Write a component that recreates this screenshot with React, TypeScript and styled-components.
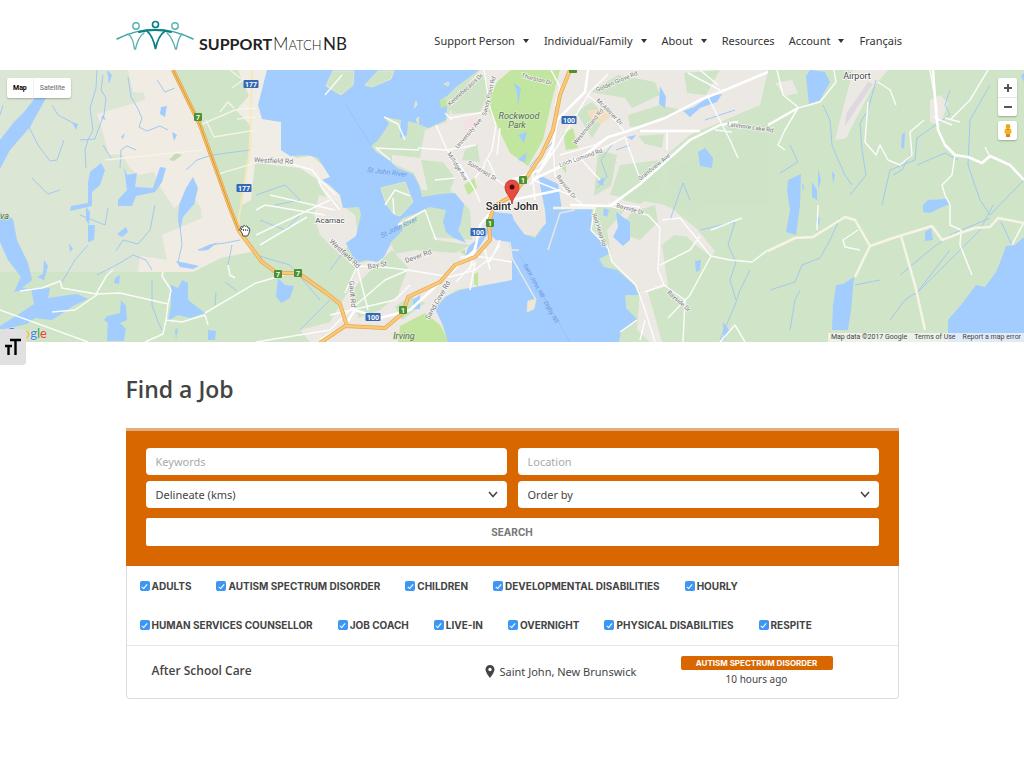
import React from "react";
import styled, { createGlobalStyle } from "styled-components";

const GlobalStyle = createGlobalStyle`
  *, *::before, *::after { box-sizing: border-box; }
  body { margin: 0; background: #fff; color: #444; font-family: "Noto Sans", "Open Sans", sans-serif; font-size: 11px; }
  a { color: inherit; text-decoration: none; }
  h1, ul { margin: 0; padding: 0; }
`;

const Header = styled.header`
  display: flex;
  justify-content: center;
  height: 70px;
  padding: 0 22px 0 16px;
`;
const HeaderInner = styled.div`
  display: flex;
  justify-content: space-between;
  width: 100%;
  max-width: 786px;
`;
const LogoLink = styled.a`
  display: flex;
  align-items: flex-start;
  padding-top: 18px;
  margin-left: -3px;
`;
const Nav = styled.nav`
  display: flex;
  align-items: center;
  padding-top: 12px;
`;
const NavList = styled.ul`
  display: flex;
  gap: 14px;
  list-style: none;
`;
const NavLink = styled.a<{ $menu?: boolean }>`
  display: flex;
  align-items: center;
  gap: 8px;
  line-height: 16px;
  color: #333;
  white-space: nowrap;
  &::after {
    content: "";
    display: ${(p) => (p.$menu ? "block" : "none")};
    border: 3px solid transparent;
    border-top: 4px solid #333;
    border-bottom: 0;
    margin-right: 1px;
  }
`;

const MapArea = styled.section`
  position: relative;
  height: 272px;
  background: #d0e4c8;
`;
const MapSvg = styled.svg`
  display: block;
  width: 100%;
  height: 100%;
  font-family: Roboto, sans-serif;
`;
const MapCard = styled.div`
  position: absolute;
  display: flex;
  background: #fff;
  border-radius: 2px;
  box-shadow: 0 1px 2px rgba(0, 0, 0, 0.25);
`;
const TypeSwitch = styled(MapCard)`
  top: 8px;
  left: 7px;
`;
const TypeButton = styled.button<{ $active?: boolean }>`
  height: 20px;
  padding: 0 6px;
  border: 0;
  background: none;
  font: ${(p) => (p.$active ? 700 : 400)} 7px Roboto, sans-serif;
  color: ${(p) => (p.$active ? "#000" : "#666")};
  & + & { border-left: 1px solid #eee; }
`;
const ZoomBox = styled(MapCard)`
  flex-direction: column;
  top: 8px;
  right: 7px;
`;
const PegmanBox = styled(MapCard)`
  top: 51px;
  right: 7px;
`;
const IconButton = styled.button`
  display: grid;
  place-items: center;
  width: 19px;
  height: 19px;
  padding: 0;
  border: 0;
  background: none;
  & + & { border-top: 1px solid #e6e6e6; }
`;
const Attribution = styled.div`
  position: absolute;
  right: 0;
  bottom: 0;
  display: flex;
  gap: 7px;
  padding: 0 3px;
  background: rgba(245, 245, 245, 0.75);
  font: 7px/9px Roboto, sans-serif;
  color: #444;
`;
const GoogleMark = styled.a`
  position: absolute;
  left: 6px;
  bottom: 1px;
  font: 500 13px/15px Lato, sans-serif;
  text-shadow: 0 0 1px #fff;
`;
const Tint = styled.span<{ $color: string }>`
  color: ${(p) => p.$color};
`;
const FontSizeButton = styled.button`
  position: absolute;
  left: 0;
  bottom: -23px;
  display: grid;
  place-items: center;
  width: 26px;
  height: 36px;
  padding: 0;
  border: 0;
  border-radius: 0 3px 3px 0;
  background: #e0e0e0;
`;

const Main = styled.main`
  width: 100%;
  max-width: 773px;
  margin: 0 auto;
  padding-bottom: 70px;
`;
const Title = styled.h1`
  padding: 31px 0 23px;
  font: 600 23px/32px "Open Sans", sans-serif;
  color: #444;
`;
const Panel = styled.div`
  border: 1px solid #ddd;
  border-top: 0;
  border-radius: 0 0 4px 4px;
`;
const SearchForm = styled.form`
  display: grid;
  grid-template-columns: 1fr 1fr;
  gap: 6px 11px;
  margin: 0 -1px;
  padding: 17px 20px 20px;
  border-top: 3px solid #e3ac7c;
  background: #d96700;
`;
const field = `
  width: 100%;
  height: 27px;
  padding: 0 10px;
  border: 0;
  border-radius: 4px;
  background: #fff;
  color: #444;
  font: 11px/16px "Noto Sans", sans-serif;
`;
const TextField = styled.input`
  ${field}
  &::placeholder { color: #aaa; opacity: 1; }
`;
const SelectWrap = styled.div`
  display: grid;
  align-items: center;
  & > * { grid-area: 1 / 1; }
  & > svg { justify-self: end; margin-right: 9px; pointer-events: none; }
`;
const SelectField = styled.select`
  ${field}
  appearance: none;
`;
const SearchButton = styled.button`
  grid-column: 1 / -1;
  height: 28px;
  margin-top: 4px;
  border: 0;
  border-radius: 2px;
  background: #fff;
  color: #777;
  font: 700 10px/12px Inter, sans-serif;
`;
const Types = styled.ul`
  display: flex;
  flex-wrap: wrap;
  gap: 23px 25px;
  padding: 12px 40px 12px 13px;
  list-style: none;
`;
const TypeLabel = styled.label`
  display: flex;
  align-items: center;
  gap: 2px;
  font: 700 10px/16px Inter, sans-serif;
  color: #444;
  white-space: nowrap;
`;
const Tick = styled.input`
  appearance: none;
  display: grid;
  place-items: center;
  width: 10px;
  height: 10px;
  margin: 0;
  border-radius: 2px;
  background: #3d97f2;
  &:checked::after {
    content: "";
    width: 3px;
    height: 6px;
    border: solid #fff;
    border-width: 0 1px 1px 0;
    transform: rotate(40deg);
  }
`;
const Job = styled.a`
  display: grid;
  grid-template-columns: 333px 1fr 152px;
  align-items: center;
  height: 53px;
  padding: 0 65px 2px 25px;
  border-top: 1px solid #e5e5e5;
`;
const JobTitle = styled.strong`
  font: 600 12px/16px "Open Sans", sans-serif;
`;
const Place = styled.span`
  display: flex;
  align-items: center;
  gap: 5px;
`;
const JobMeta = styled.span`
  display: flex;
  flex-direction: column;
  align-items: center;
  gap: 2px;
  font-size: 10px;
  line-height: 15px;
`;
const Badge = styled.span`
  width: 100%;
  border-radius: 2px;
  background: #d96700;
  color: #fff;
  text-align: center;
  font: 700 8px/14px Inter, sans-serif;
`;

const Logo = () => (
  <svg width="240" height="40" viewBox="113 18 240 40" role="img" aria-label="Support Match NB">
    <g fill="none" strokeLinecap="round">
      <path d="M117 39 Q155 20 193 39" stroke="#3fa3a8" strokeWidth="1.6" />
      <path d="M139 32 Q155 28 171 32" stroke="#0d8086" strokeWidth="2" />
      <g stroke="#5ab1b4" strokeWidth="1.4">
        <circle cx="136" cy="26" r="3.2" />
        <circle cx="175" cy="26" r="3.2" />
        <path d="M128 34 Q133 37 134.500 49 M144 33 Q138 37 135.500 49" />
        <path d="M167 33 Q172 37 175.500 49 M182 34 Q178 38 176.500 49" />
      </g>
      <g stroke="#0d8086" strokeWidth="1.7">
        <circle cx="155.500" cy="24.500" r="3" />
        <path d="M147 31 Q153 36 155.500 49 Q158 36 165 31" />
      </g>
    </g>
    <g fill="#222" fontFamily="Lato, sans-serif">
      <text x="199" y="50" fontSize="16" fontWeight="700">SUPPORT</text>
      <text x="273" y="50" fontSize="17" fontWeight="300">M<tspan fontSize="13">ATCH</tspan></text>
      <text x="323" y="50" fontSize="17" fontWeight="400">NB</text>
    </g>
  </svg>
);

const Shield = ({ x, y, n, green }: { x: number; y: number; n?: string; green?: boolean }) => {
  const w = green ? 8 : 15;
  return (
    <g>
      <rect x={x - w / 2} y={y - 4} width={w} height="8" rx="1" fill={green ? "#4d9135" : "#3468b5"} />
      {n && <text x={x} y={y + 3} fontSize="7" fontWeight="700" fill="#fff" textAnchor="middle">{n}</text>}
    </g>
  );
};

const RoadLabel = ({ x, y, r = 0, size = 7, children }: { x: number; y: number; r?: number; size?: number; children: string }) => (
  <text transform={`translate(${x} ${y}) rotate(${r})`} fontSize={size} fill="#777" stroke="#fff" strokeWidth="1.5" paintOrder="stroke" strokeOpacity=".7">
    {children}
  </text>
);

const CityMap = () => (
  <MapSvg viewBox="0 70 1024 272" preserveAspectRatio="xMidYMid slice" role="img" aria-label="Map of Saint John">
    <rect x="0" y="70" width="1024" height="272" fill="#d0e4c8" />
    <path fill="#dce6d5" d="M0 70H174L200 128 229 210 250 245 193 272H0Z" />
    <path fill="#f0ece3" d="M128 70 133 92 144 93 145 100 97 114 101 126 109 155 122 154 130 168 138 175 154 172 161 188 174 208 193 196 201 208 202 218 162 235 167 260 140 256 138 272H193L220 258 256 251 245 236 229 210 215 165 200 128 174 70Z" />
    <path fill="#c5dbb8" d="M169 160 176 153 182 155 174 161Z" />
    <path fill="#efede5" d="M238 70H268L260 105 263 118 281 122 284 150 296 158 312 156 330 172 340 195 344 214 334 212 318 180 300 168 255 163 251 200 242 205 248 160 250 125 236 110 249 96Z" />

    {/* built-up areas */}
    <g fill="#ece9e4">
      <path d="M480 70 455 98 446 122 425 130 420 158 392 155 392 163 414 173 422 190 450 190 470 210 472 240 400 235 380 258 357 264 350 288 330 322 300 330 310 342H448L435 305 456 290 512 281 520 240 545 225 560 208 620 206 670 215 690 240 710 256 700 235 665 205 610 195 620 165 660 160 690 135 760 105 768 70Z" />
      <path d="M607 230 612 262 640 290 637 330 650 342H662L648 292 668 286 662 245 674 235 700 238 712 256 715 251 698 230 670 207 628 207Z" />
      <path d="M853 70 835 140 846 138 871 90 888 70Z" />
      <path d="M319 195 335 200 355 215 358 235 340 255 320 235 314 215Z" />
      <path d="M775 83 792 80 798 93 785 96Z M930 100 940 95 948 103 940 125 930 122Z" />
    </g>
    <path fill="#ddd9df" d="M846 114 868 82 873 84 845 126Z" />
    <g fill="#cfe3c6">
      <path d="M449 99 476 78 484 74 490 92 480 112 452 114Z M379 139 400 122 424 136 411 155 374 146Z" />
      <path d="M421 160 443 162 455 178 450 191 428 191Z M465 150 477 144 480 162 462 160Z M590 92 618 75 655 82 660 95 632 108 625 98Z M628 115 660 105 680 110 650 125 630 127Z M576 112 592 102 606 116 592 138Z M638 136 664 134 662 148 645 144Z M598 150 617 155 611 186 594 196Z M381 188 405 182 413 202 400 216 384 206Z" />
      <path d="M390 240 412 225 436 240 470 245 456 253 415 250 395 254Z M360 281 392 250 408 268 398 295 380 310 359 318 350 294Z M410 296 425 303 402 320 395 307Z" />
      <path d="M684 73 720 70 706 95 687 93Z M700 135 724 130 730 145 710 150Z" />
      <path d="M617 232 640 240 658 222 655 205 632 212Z M668 168 700 160 735 140 768 120V205H700L690 215 672 200Z M622 200 650 172 660 190 640 204Z" />
    </g>
    <g fill="#c2e69f">
      <path d="M511 70H560L552 100 543 140 528 166 510 153 496 124 486 106 497 82Z" />
      <path d="M563 133 573 128 578 148 566 150Z M464 185 474 178 477 188 468 195Z M561 167 566 166 566 173Z M460 252 465 249 465 255Z M474 274 478 272 478 287 474 284Z M400 326 425 313 440 325 449 342H398Z M441 98 447 101 446 110 439 106Z" />
    </g>
    <path fill="#f2dfc3" d="M587 111 601 108 612 116 601 124 590 118Z" />
    <path fill="#f3e2e3" d="M463 121 472 117 480 121 475 131 464 130Z" />

    {/* open water */}
    <g fill="#a3ccff">
      <path d="M267 70H479L456 87 447 96 440 100 441 108 447 106 446 120 428 128 418 124 408 121 407 135 400 138 401 120 384 117 389 124 378 140 371 146 376 152 389 160 397 168 413 174 419 185 422 197 440 194 455 193 464 204 461 222 458 230 466 243 454 238 446 232 443 222 446 210 430 207 417 213 403 218 398 223 403 230 391 242 384 257 377 262 366 260 356 263 346 243 356 236 361 215 359 207 343 208 340 195 329 185 322 180 330 177 318 158 308 155 290 156 281 150 281 122 262 119 258 105Z" />
      <path d="M494 212 512 214 514 220 524 234 535 238 546 223 545 210 540 185 539 175 558 184 562 210 572 207 592 208 591 231 607 246 609 254 599 259 604 267 617 270 634 285 639 295 625 295 626 308 637 319 621 331 619 342H448L443 325 435 309 445 297 460 290 486 285 512 280 512 262 509 242 496 240 488 233 478 249 464 258 469 246 484 234 489 223Z" />
      <path d="M1024 237 1015 245 1006 246 1001 260 996 272 985 287 976 285 961 305 948 320V342H1024Z" />
      <path d="M35 98 46 98 30 127 10 150 0 169V140L14 122 24 112Z" />
      <path d="M0 212 13 219 17 240 28 263 32 280 22 288 36 289 50 288 48 298 77 294 88 299 75 305 52 320 35 318 27 324 0 330V326L19 314 34 304 31 288 14 292 21 277 8 260 0 242Z" />
      <path d="M37 277 43 274 44 260 48 266 44 280Z M90 172 101 163 105 170 100 185 92 192 92 206 70 211 71 206 88 203 88 182Z M124 167 127 175 137 173 135 187 153 188 160 167 166 168 162 182 155 192 136 196 132 206 118 206 118 200 127 190Z" />
      <path d="M193 177 198 188 194 205 186 208 180 220 179 205 186 188Z M179 205H193L183 217 180 230 178 220Z M176 261 186 263 199 266 193 269 180 267Z M171 285 178 288 182 280 188 283 188 300 205 313 190 318 178 315 168 321 171 305Z" />
      <path d="M121 300 126 306 127 320 120 323 126 329 124 341 107 341 108 316 120 313Z M104 320 108 315 109 324Z M88 225 95 225 94 240 88 242Z M86 207 90 212 89 225 86 220Z M117 234 126 227 128 232 122 237Z M69 243 73 249 70 252Z M115 278 120 275 119 284 114 283Z" />
      <path d="M161 107 167 106 165 117 160 114Z M172 132 177 135 174 141Z M72 122 78 124 76 130Z M107 70 112 75 109 84Z M103 115 106 120 101 118Z M121 137 125 133 123 139Z M198 251 210 245 218 242 208 250Z M208 330 216 331 215 340H208Z M175 330 178 328 176 340Z" />
      <path d="M278 278 285 285 294 286 290 298 281 303 276 296Z M413 300 420 295 420 309 413 309Z M616 212 630 222 630 240 623 246 613 237 618 227Z M604 208 609 210 607 217 603 215Z M660 86 666 97 665 108 659 104Z" />
      <path d="M514 83 521 88 518 106 517 92Z M518 160 527 152 525 162Z M518 135 527 132 524 143Z M683 111 694 107 710 96 722 94 717 102 700 108 690 117Z M698 152 705 148 713 158 712 168 700 166Z M627 137 636 135 632 140Z M597 182 604 177 603 186Z M695 261 701 260 700 270 696 272Z" />
      <path d="M806 76 810 70 825 72 830 82 820 100 809 104Z M902 134 905 133 904 149 901 147Z M836 285 843 284 854 277 851 310 848 330 832 330 833 305Z M1021 76 1024 73V82Z M923 205 928 200 946 199 950 204 940 208 930 213 923 212Z M925 232 931 228 933 240 925 241Z" />
      <path d="M788 180 801 174 800 205 796 235 786 232 790 210 787 190Z M802 183 804 186 803 192Z M812 182 817 190 817 200 812 197Z M818 169 821 180 818 189Z M832 171 835 175 833 184Z M816 219 820 217 819 226Z M723 322 729 330 724 341Z" />
    </g>
    <g fill="#cfe3c6" stroke="#e4e8cf" strokeWidth="1">
      <path d="M326 86 333 71H354L353 85 341 95Z M365 85 378 71H394L391 79 372 87Z M414 108 416 101 417 105Z M416 119 419 117 418 124Z M444 84 449 82 448 86Z" />
      <path d="M381 188 405 182 413 202 400 216 394 214 386 204Z" />
      <path fill="#efe8d6" d="M528 301 536 299 534 309 527 312Z" />
    </g>

    {/* streams */}
    <g fill="none" stroke="#a3c8f2" strokeWidth="1">
      <path d="M97 70 96 88 90 108 93 130 88 140 85 150 86 168 M103 75 101 90 106 98 104 115 98 130 95 139 80 140 M103 145 111 158 M128 77 131 97 137 107 142 118 139 127 147 131 160 126 168 130 M157 80 165 92 175 88 M186 170 197 160 212 155 250 150 M29 127 38 145 50 161 57 160 64 140 M52 105 58 115 75 124" />
      <path d="M120 168 121 150 127 146 136 150 M32 178 48 194 60 190 M3 105 0 115 M80 215 105 225 108 208 M62 282 75 260 88 245 M116 251 123 240 138 244 150 230 155 205 M97 275 120 263 133 255 146 260 152 270 M198 250 210 245 225 243 240 240" />
      <path d="M180 225 182 245 178 262 M152 280 152 305 158 322 162 330 M216 292 215 305 M225 282 237 291 M232 245 228 265" />
      <path d="M256 195 285 185 300 200 275 205 M256 255 290 265 320 300 M260 220 285 230 300 215 M330 270 345 250 M300 330 330 300" />
      <path d="M613 143 601 160 607 177 597 188 M616 150 630 145 M690 200 683 183 670 220 M700 230 735 222 728 245 736 262 730 280 736 300 M705 120 735 110 M750 270 740 290 735 305 720 340" />
      <path d="M823 105 830 120 832 145 836 155 845 175 852 185 M876 80 868 110 860 123 862 150 866 175 850 195 M910 155 902 170 893 175 M950 90 945 105 950 115 917 138 915 160 890 170 882 205 M917 165 945 153 958 160 M990 85 970 120 968 165 980 200 990 215 1024 180 M790 145 798 162 780 173" />
      <path d="M770 290 795 282 802 265 820 258 830 240 840 218 M790 330 795 300 800 290 M890 320 905 300 920 290 980 230 993 205 M900 275 930 250 950 235 990 218 M855 285 880 280 M950 250 915 295 M1001 222 1012 245" />
      <path d="M540 180 530 166 545 150 555 140" />
    </g>

    {/* local streets */}
    <g fill="none" stroke="#fff" strokeLinejoin="round">
      <g strokeWidth="1.5" opacity=".9">
        <path d="M252 70 251 100 250 150 243 190 238 225" stroke="#f7e8b6" strokeWidth="2" />
        <path d="M200 125 235 110 256 108 M206 120 214 137 256 130 M220 112 228 102 234 108 M218 174 256 163 M230 70 243 80 232 88 M237 119 256 117 M203 150 105 160" stroke="#f7f5ea" />
        <path d="M20 291 42 288 60 281 62 288 96 294 107 275 113 270 M96 294 120 293 168 304 171 290 162 276 163 272 M98 294 75 310 52 312 M168 304 166 320 182 322 205 315 208 325 M205 313 256 283 M166 320 163 334 145 342 M256 283 284 275 M228 265 230 275 235 278 M0 310 88 342" />
        <path d="M256 158 285 162 312 170 320 180 336 195 M318 180 322 188 340 210 M256 235 330 200 M256 210 265 205 325 215 M260 245 307 217 M270 195 335 210 M330 240 350 262 357 266 392 268 408 270 450 277 M357 266 345 293 M408 270 385 280 350 310 M350 310 330 330 256 342 M357 266 368 310 M330 315 395 300 410 285" />
        <path d="M325 95 342 75 M385 205 395 190 410 196 M393 198 394 214 M398 225 425 210 436 240 M390 160 376 148 395 149 419 150 M384 117 398 124 405 140" />
        <path d="M436 125 447 150 460 165 474 188 480 202 M447 150 418 148 M447 150 476 145 M448 154 462 167 M450 118 485 112 M445 113 452 120 M484 70 490 108 496 125 492 150 484 164 M488 160 497 180 512 190 M475 178 485 165 M500 128 497 155 M435 180 455 178" />
        <path d="M475 245 470 270 M450 277 475 270 488 260 M460 258 485 250 490 270 M500 240 490 262 M456 282 475 262 470 290 M470 255 512 262 M488 262 500 245" />
        <path d="M551 70 560 87 555 106 M530 185 555 150 590 92 608 74 M560 155 595 145 608 137 M587 95 605 108 625 132 M553 145 555 175 565 190 585 207 M553 152 532 170 535 200 M533 180 570 195 M558 168 580 158 600 180 M600 150 625 137 640 179" />
        <path d="M707 95 730 140 738 158 M688 73 720 90 M715 130 732 132 M667 130V150 M609 204 640 207 M700 70 718 85" />
        <path d="M595 207 591 230 608 248 612 262 636 285 645 310 655 342 M609 206 648 215 660 228 658 270 664 285 M664 285 645 292 M664 285 685 300 683 342 M662 220 680 218 711 256 730 260 752 262 768 250 M711 256 690 295 668 318 M711 230 742 218 M660 265 690 250 700 236" />
        <path d="M637 320 620 332 M645 320 640 340 M720 342 735 325 745 342 M777 70 783 95 798 107" />
        <path d="M834 70 836 82 820 102 798 108 785 130 778 145 785 150 M878 82 890 90 896 105 M868 102 865 142 876 155 880 145 888 160 900 165 912 155 910 132 924 120" />
        <path d="M930 70 937 110 935 118 952 125 M945 118 960 122 M950 120 970 100 988 70 M955 155 952 175 942 185 945 195 950 205 950 225 961 230 960 245 972 275" />
        <path d="M985 147 989 155 M860 250 845 247 843 240 858 230 M818 205 817 230 M1012 245 1024 222" />
      </g>
      <g strokeWidth="2.500">
        <path d="M320 340 345 325 355 310 380 318 410 310 475 250 480 225 497 205 512 196" />
        <path d="M512 180 540 170 553 145 557 120 585 92 588 70 M532 180 585 155 608 137 625 132 665 118 700 100 730 88 768 72" />
        <path d="M512 200 560 190 M570 205 610 206 640 184 665 162 690 140 720 125 738 122 M640 131 700 131" />
        <path d="M768 125 798 108 M933 70 936 110 938 130 945 145 955 155 968 157 982 163 990 156 1010 165 1024 180" />
        <path d="M768 251 795 238 813 237 845 217 855 220 870 246 893 238 932 226 942 240 960 233 975 228 990 227 998 218 1024 223 M870 246 855 277 M901 236 915 285 925 330 M553 208 595 208" stroke="#f6f4e6" />
        <path d="M575 210 560 213 548 250" stroke="#e8e8df" strokeWidth="1.5" />
      </g>
    </g>

    {/* highways */}
    <g fill="none" strokeLinejoin="round">
      <g stroke="#e5a850" strokeWidth="4">
        <path d="M173 70 200 125 230 208 239 231 262 262 277 273H298L325 292 340 304 347 326" />
        <path d="M320 343 345 326 385 328 403 313 408 297 440 282 455 265 475 257 490 240 489 222 494 206 512 196 527 177 541 156 553 130 560 95 570 70" />
      </g>
      <g stroke="#f9c878" strokeWidth="2.500">
        <path d="M173 70 200 125 230 208 239 231 262 262 277 273H298L325 292 340 304 347 326" />
        <path d="M320 343 345 326 385 328 403 313 408 297 440 282 455 265 475 257 490 240 489 222 494 206 512 196 527 177 541 156 553 130 560 95 570 70" />
      </g>
      <path d="M173 70 200 125 230 208 239 231" stroke="#d9962f" strokeWidth="1" />
    </g>

    <path d="M510 242 512 258 536 300 M508 250H519" stroke="#eceae2" strokeWidth="1.500" fill="none" />
    <path d="M520 255 570 342 M346 105 371 145" stroke="#8fb8ec" strokeWidth=".7" strokeDasharray="2 1" fill="none" />
    <path d="M514 209 542 209 544 223 535 236 525 232 516 220Z" fill="#eae7e3" stroke="#f3e6d6" />

    <Shield x={251} y={84} n="177" />
    <Shield x={244} y={188} n="177" />
    <Shield x={569} y={120} n="100" />
    <Shield x={478} y={232} n="100" />
    <Shield x={373} y={317} n="100" />
    <Shield x={198} y={117} n="7" green />
    <Shield x={278} y={274} n="7" green />
    <Shield x={298} y={273} n="7" green />
    <Shield x={523} y={180} n="1" green />
    <Shield x={490} y={223} n="1" green />
    <Shield x={403} y={310} n="1" green />
    <Shield x={573} y={69} green />

    <RoadLabel x={254} y={162} r={3}>Westfield Rd</RoadLabel>
    <RoadLabel x={329} y={242} r={43}>Westfield Rd</RoadLabel>
    <RoadLabel x={368} y={269} r={-10}>Bay St</RoadLabel>
    <RoadLabel x={406} y={263} r={-20}>Dever Rd</RoadLabel>
    <RoadLabel x={349} y={281} r={85}>Gault Rd</RoadLabel>
    <RoadLabel x={429} y={320} r={-60}>Sand Cove Rd</RoadLabel>
    <RoadLabel x={450} y={106} r={-42} size={6}>Kennebecasis Dr</RoadLabel>
    <RoadLabel x={486} y={116} r={-76} size={6}>Sandy Point Rd</RoadLabel>
    <RoadLabel x={458} y={149} r={-50} size={6}>University Ave</RoadLabel>
    <RoadLabel x={447} y={154} r={57} size={6}>Millidge Ave</RoadLabel>
    <RoadLabel x={467} y={164} r={31} size={6}>Somerset St</RoadLabel>
    <RoadLabel x={521} y={77} r={15} size={6}>Thurston Dr</RoadLabel>
    <RoadLabel x={597} y={92} r={-23} size={6}>Golden Grove Rd</RoadLabel>
    <RoadLabel x={596} y={101} r={45} size={6}>McAllister Dr</RoadLabel>
    <RoadLabel x={576} y={145} r={-51} size={6}>Westmorland Rd</RoadLabel>
    <RoadLabel x={560} y={167} r={-19} size={6}>Loch Lomond Rd</RoadLabel>
    <RoadLabel x={556} y={177} r={52} size={6}>Bayside Dr</RoadLabel>
    <RoadLabel x={640} y={181} r={-39} size={6}>Grandview Ave</RoadLabel>
    <RoadLabel x={727} y={126} r={8} size={6}>Latimore Lake Rd</RoadLabel>
    <RoadLabel x={616} y={207} r={16} size={6}>Bayside Dr</RoadLabel>
    <RoadLabel x={667} y={293} r={42} size={6}>Bayside Dr</RoadLabel>
    <RoadLabel x={592} y={214} r={72} size={6}>Red Head Rd</RoadLabel>

    <g fontSize="7" fill="#6d9bd9" fontStyle="italic">
      <text transform="translate(367 172) rotate(7)">St John River</text>
      <text transform="translate(382 238) rotate(-26)">St John River</text>
      <text transform="translate(523 265) rotate(61)" fontSize="6">Saint John, NB - Digby, NS</text>
    </g>
    <g fontSize="9" fill="#55704a" fontStyle="italic" stroke="#d9ebc8" strokeWidth="1.500" paintOrder="stroke">
      <text x="519" y="119" textAnchor="middle">Rockwood</text>
      <text x="517" y="128" textAnchor="middle">Park</text>
      <text x="404" y="339" textAnchor="middle">Irving</text>
      <text x="0" y="219">va</text>
    </g>
    <g fill="#444" stroke="#fff" strokeWidth="1.500" paintOrder="stroke" textAnchor="middle">
      <text x="330" y="223" fontSize="8">Acamac</text>
      <text x="857" y="79" fontSize="9">Airport</text>
      <text x="512" y="210" fontSize="11" fontWeight="500" fill="#222">Saint John</text>
    </g>

    <path d="M512 204C511 196 505 194 505 187A7 7 0 0 1 519 187C519 194 513 196 512 204Z" fill="#ea4b40" stroke="#b5322c" strokeWidth=".8" />
    <circle cx="512" cy="187" r="2.500" fill="#4b100d" />
    <path d="M243 236 242 233 239.500 229.500Q240 228 242 230L240.500 227Q241.500 225.500 243 227.500L243.200 226Q244.500 224.500 245.500 226.500L246.500 226Q247.800 226 248 228Q250 227.500 249.800 230L249 233 247.500 236Z M243.500 229V231 M245.700 229V231 M247.700 229.500V231" fill="#fff" stroke="#222" strokeWidth=".8" />
  </MapSvg>
);

const Chevron = () => (
  <svg width="10" height="7" viewBox="0 0 10 7" aria-hidden="true">
    <path d="M1 1 5 5.500 9 1" fill="none" stroke="#444" strokeWidth="1.500" />
  </svg>
);

const menu = [
  { label: "Support Person", sub: true },
  { label: "Individual/Family", sub: true },
  { label: "About", sub: true },
  { label: "Resources" },
  { label: "Account", sub: true },
  { label: "Français" },
];

const jobTypes = [
  "ADULTS", "AUTISM SPECTRUM DISORDER", "CHILDREN", "DEVELOPMENTAL DISABILITIES", "HOURLY",
  "HUMAN SERVICES COUNSELLOR", "JOB COACH", "LIVE-IN", "OVERNIGHT", "PHYSICAL DISABILITIES", "RESPITE",
];

const googleLetters: [string, string][] = [
  ["G", "#4285f4"], ["o", "#ea4335"], ["o", "#fbbc05"], ["g", "#4285f4"], ["l", "#34a853"], ["e", "#ea4335"],
];

export default function App() {
  return (
    <>
      <GlobalStyle />
      <Header>
        <HeaderInner>
          <LogoLink href="#"><Logo /></LogoLink>
          <Nav>
            <NavList>
              {menu.map((m) => (
                <li key={m.label}><NavLink href="#" $menu={m.sub}>{m.label}</NavLink></li>
              ))}
            </NavList>
          </Nav>
        </HeaderInner>
      </Header>
      <MapArea>
        <CityMap />
        <TypeSwitch>
          <TypeButton type="button" $active>Map</TypeButton>
          <TypeButton type="button">Satellite</TypeButton>
        </TypeSwitch>
        <ZoomBox>
          <IconButton type="button" aria-label="Zoom in">
            <svg width="8" height="8"><path d="M0 4H8M4 0V8" stroke="#555" strokeWidth="2" /></svg>
          </IconButton>
          <IconButton type="button" aria-label="Zoom out">
            <svg width="8" height="8"><path d="M0 4H8" stroke="#555" strokeWidth="2" /></svg>
          </IconButton>
        </ZoomBox>
        <PegmanBox>
          <IconButton type="button" aria-label="Street view">
            <svg width="10" height="14" viewBox="0 0 10 14">
              <path d="M1.500 6Q2 4 5 4T8.500 6V9L7 10V13H3V10L1.500 9Z" fill="#f5b32c" />
              <path d="M3 10H7V13H3ZM4 5H6V6H4Z" fill="#d58a15" />
              <circle cx="5" cy="2.500" r="2.400" fill="#f0a61f" />
            </svg>
          </IconButton>
        </PegmanBox>
        <GoogleMark href="#" aria-label="Google">
          {googleLetters.map(([c, color], i) => <Tint key={i} $color={color}>{c}</Tint>)}
        </GoogleMark>
        <Attribution>
          <span>Map data ©2017 Google</span>
          <a href="#">Terms of Use</a>
          <a href="#">Report a map error</a>
        </Attribution>
        <FontSizeButton type="button" aria-label="Text size">
          <svg width="16" height="18" viewBox="0 0 16 18">
            <path d="M5 2H16M10.500 2V17M0 8H7M3.500 8V17" fill="none" stroke="#000" strokeWidth="2.400" />
          </svg>
        </FontSizeButton>
      </MapArea>
      <Main>
        <Title>Find a Job</Title>
        <Panel>
          <SearchForm onSubmit={(e) => e.preventDefault()}>
            <TextField type="text" placeholder="Keywords" aria-label="Keywords" />
            <TextField type="text" placeholder="Location" aria-label="Location" />
            <SelectWrap>
              <SelectField aria-label="Delineate (kms)"><option>Delineate (kms)</option></SelectField>
              <Chevron />
            </SelectWrap>
            <SelectWrap>
              <SelectField aria-label="Order by"><option>Order by</option></SelectField>
              <Chevron />
            </SelectWrap>
            <SearchButton type="submit">SEARCH</SearchButton>
          </SearchForm>
          <Types>
            {jobTypes.map((t) => (
              <li key={t}>
                <TypeLabel><Tick type="checkbox" defaultChecked />{t}</TypeLabel>
              </li>
            ))}
          </Types>
          <Job href="#">
            <JobTitle>After School Care</JobTitle>
            <Place>
              <svg width="10" height="13" viewBox="0 0 10 13" aria-hidden="true">
                <path fillRule="evenodd" d="M5 0A4.500 4.500 0 0 0 .5 4.500C.5 7.500 5 13 5 13S9.500 7.500 9.500 4.500A4.500 4.500 0 0 0 5 0ZM5 2.800A1.700 1.700 0 1 1 5 6.200 1.700 1.700 0 0 1 5 2.800Z" fill="#444" />
              </svg>
              Saint John, New Brunswick
            </Place>
            <JobMeta>
              <Badge>AUTISM SPECTRUM DISORDER</Badge>
              10 hours ago
            </JobMeta>
          </Job>
        </Panel>
      </Main>
    </>
  );
}
